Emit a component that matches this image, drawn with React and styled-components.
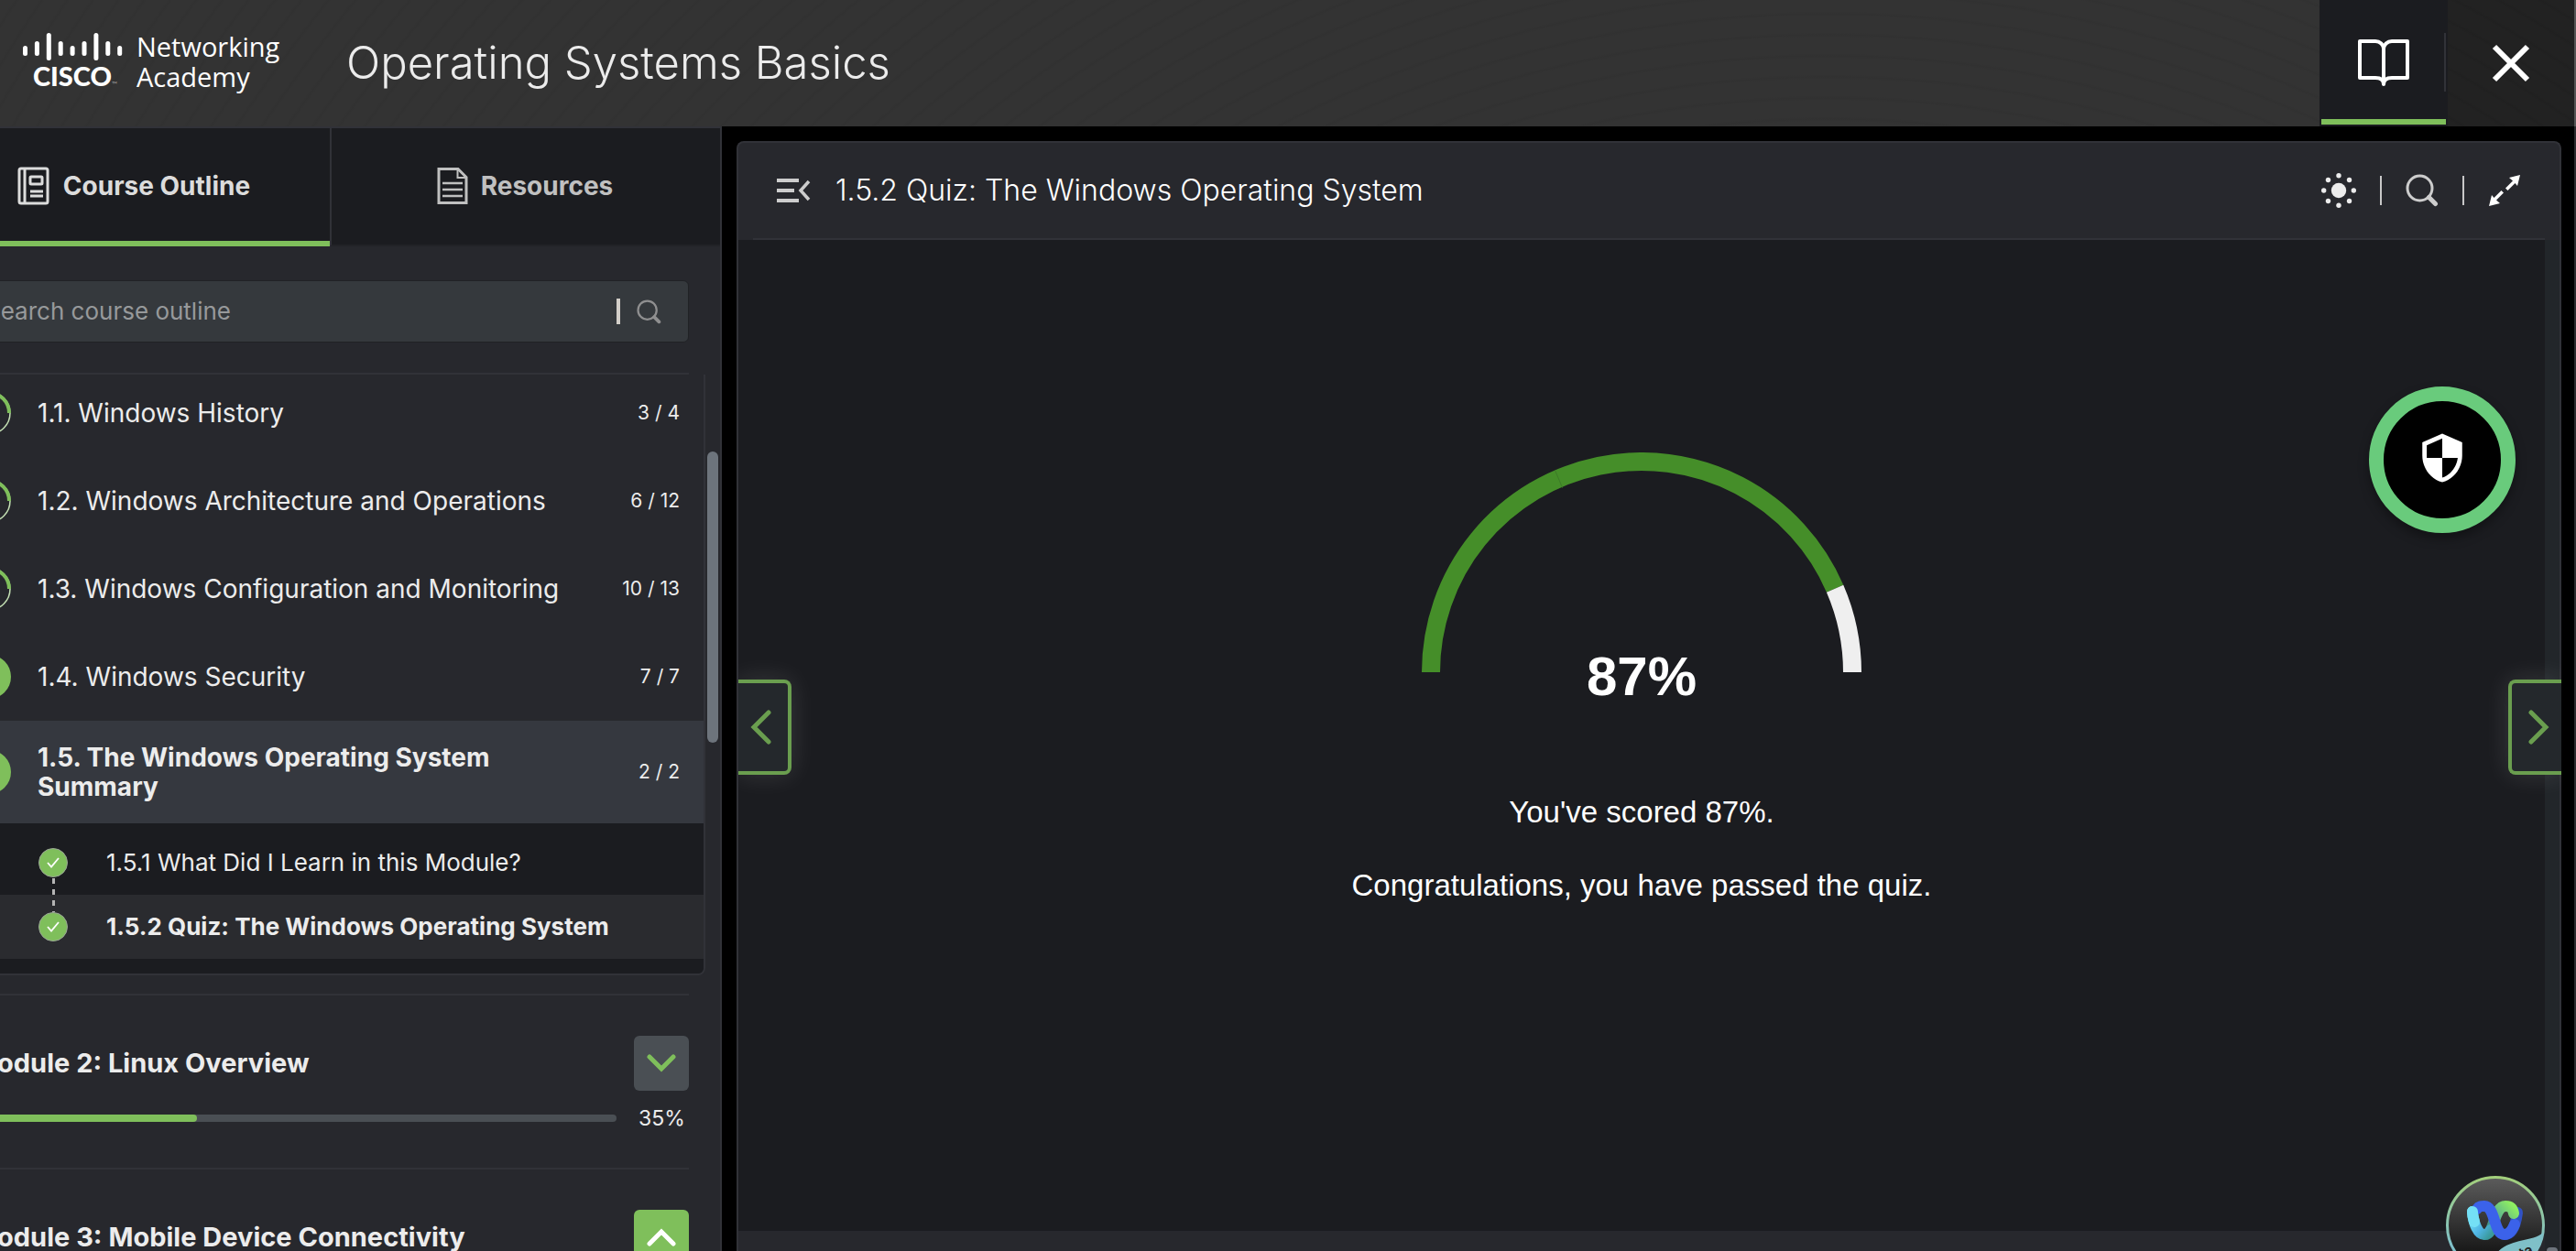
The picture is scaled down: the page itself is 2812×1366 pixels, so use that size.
import React from "react";
import styled, { createGlobalStyle, css } from "styled-components";
import { MdSecurity } from "react-icons/md";

const c = {
  green: "#7fbf5b",
  line: "#313238",
  panel: "#27282d",
  dark: "#1b1c20",
  text: "#ececec",
};

const GlobalStyle = createGlobalStyle`
  * { box-sizing: border-box; }
  body { margin: 0; background: #000; }
  button { font: inherit; color: inherit; background: none; border: 0; padding: 0; cursor: pointer; }
  svg { display: block; }
  h1, h2, h3, p, ul { margin: 0; padding: 0; }
  ul { list-style: none; }
`;

const Page = styled.div`
  display: flex;
  flex-direction: column;
  height: 100vh;
  overflow: hidden;
  color: ${c.text};
  font-family: Inter, "Liberation Sans", sans-serif;
  font-size: 28px;
  line-height: 32px;
`;

/* ---------- top bar ---------- */
const TopBar = styled.header`
  display: flex;
  flex: 0 0 138px;
  align-items: center;
  padding-left: 24px;
  border-right: 2px solid #555;
  background:
    repeating-radial-gradient(circle at 71% 1300px, transparent 0 17px, rgba(0, 0, 0, 0.04) 20px, transparent 23px),
    #333;
`;
const Brand = styled.a`
  display: flex;
  align-items: center;
  gap: 15px;
  width: 354px;
  padding-bottom: 4px;
  color: #fff;
  text-decoration: none;
`;
const CiscoMark = styled.span`
  display: flex;
  flex-direction: column;
  align-items: center;
  width: 110px;
  svg { width: 110px; height: 32px; }
`;
const CiscoWord = styled.span`
  display: flex;
  align-items: flex-end;
  padding-left: 6px;
  font: 900 29px/32px Lato, sans-serif;
  small { color: #999; font: 400 8px/14px Lato, sans-serif; }
`;
const AcademyWord = styled.span`
  font: 400 29px/33px "Open Sans", "Noto Sans", sans-serif;
`;
const CourseTitle = styled.h1`
  flex: 1;
  font-size: 49px;
  line-height: 60px;
  font-weight: 350;
`;
const TopButton = styled.button`
  display: flex;
  align-items: center;
  justify-content: center;
  align-self: stretch;
  position: relative;
  width: ${(p) => (p.$active ? 140 : 138)}px;
  background: ${(p) => (p.$active ? c.dark : "rgba(0, 0, 0, 0.33)")};
  ${(p) =>
    p.$active &&
    css`
      &::before {
        content: "";
        position: absolute;
        inset: auto 2px 2px;
        height: 6px;
        background: ${c.green};
      }
      &::after {
        content: "";
        position: absolute;
        top: 36px;
        right: 2px;
        width: 2px;
        height: 64px;
        background: ${c.line};
      }
    `}
`;

/* ---------- frame ---------- */
const Body = styled.div`
  display: flex;
  flex: 1;
  min-height: 0;
  border-right: 2px solid #2b2c2e;
`;
const Sidebar = styled.aside`
  position: relative;
  flex: 0 0 854px;
  margin-left: -66px;
  overflow: hidden;
  border-right: 2px solid ${c.line};
  background: ${c.panel};
`;
const Tabs = styled.div`
  display: grid;
  grid-template-columns: 1fr 1fr;
  height: 131px;
  border-top: 2px solid ${c.line};
`;
const Tab = styled.button`
  display: flex;
  align-items: center;
  justify-content: center;
  gap: 14px;
  padding: 2px 2px ${(p) => (p.$active ? 0 : 4)}px 0;
  background: ${c.dark};
  color: ${(p) => (p.$active ? "#dcdcdc" : "#c0c0c0")};
  font-weight: 700;
  border-bottom: ${(p) => (p.$active ? `6px solid ${c.green}` : "2px solid #222327")};
  & + & { border-left: 2px solid ${c.line}; }
`;
const Inset = styled.div`
  padding: 0 34px;
`;
const SearchBox = styled.label`
  display: flex;
  align-items: center;
  gap: 18px;
  height: 68px;
  margin: 37px 0 33px;
  padding: 0 29px 0 15px;
  border: 1px solid #202225;
  border-radius: 6px;
  background: #35393d;
`;
const SearchInput = styled.input`
  flex: 1;
  min-width: 0;
  padding: 0;
  border: 0;
  outline: 0;
  background: none;
  color: ${c.text};
  font: 400 26px/32px Inter, "Liberation Sans", sans-serif;
  &::placeholder { color: #97999b; opacity: 1; }
`;
const Caret = styled.span`
  width: 4px;
  height: 28px;
  background: #d3cfc9;
`;
const Rule = styled.hr`
  height: 2px;
  margin: 0;
  border: 0;
  background: ${c.line};
`;
const Outline = styled.div`
  margin: 0 16px 20px 0;
  overflow: hidden;
  border: solid ${c.line};
  border-width: 0 2px 2px 0;
  border-radius: 0 0 8px 0;
`;
const OutlineList = styled.ul`
  margin-top: -6px;
`;
const TopicRow = styled.button`
  display: flex;
  align-items: center;
  width: 100%;
  padding: ${(p) => (p.$active ? 24 : 32)}px 26px ${(p) => (p.$active ? 24 : 32)}px 30px;
  background: ${(p) => (p.$active ? "#35383f" : "transparent")};
  font-weight: ${(p) => (p.$active ? 700 : 400)};
  text-align: left;
`;
const Ring = styled.svg`
  flex: none;
  width: 48px;
  height: 48px;
  margin: -8px 29px -8px 0;
`;
const TopicName = styled.span`
  flex: 1;
`;
const Count = styled.span`
  width: 110px;
  font-size: 21px;
  font-weight: 400;
  text-align: right;
`;
const Lessons = styled.ul`
  padding: 8px 0 16px;
  background: ${c.dark};
`;
const LessonRow = styled.button`
  display: flex;
  align-items: center;
  gap: 42px;
  width: 100%;
  height: 70px;
  padding-left: 108px;
  background: ${(p) => (p.$active ? "#2a2b2f" : "transparent")};
  font-size: 26px;
  font-weight: ${(p) => (p.$active ? 700 : 400)};
  text-align: left;
`;
const Done = styled.span`
  display: grid;
  place-items: center;
  position: relative;
  width: 32px;
  height: 32px;
  border: 1px solid #9aa595;
  border-radius: 50%;
  background: ${c.green};
  ${(p) =>
    p.$linked &&
    css`
      &::after {
        content: "";
        position: absolute;
        top: 32px;
        left: 14px;
        width: 3px;
        height: 37px;
        background: repeating-linear-gradient(#b4b4b4 0 6px, transparent 6px 12px);
      }
    `}
`;
const Module = styled.section`
  padding: 44px 0 40px;
  border-top: 2px solid ${c.line};
`;
const ModuleHead = styled.div`
  display: flex;
  align-items: center;
  justify-content: space-between;
`;
const ModuleTitle = styled.h3`
  padding-left: 2px;
  font-size: 29px;
  line-height: 36px;
  font-weight: 700;
`;
const Toggle = styled.button`
  display: grid;
  place-items: center;
  width: 60px;
  height: 60px;
  border-radius: 6px;
  background: ${(p) => (p.$open ? c.green : "#4a4f54")};
  color: ${(p) => (p.$open ? "#fff" : c.green)};
`;
const ProgressRow = styled.div`
  display: flex;
  align-items: center;
  gap: 24px;
  height: 28px;
  margin-top: 16px;
  font-size: 23px;
`;
const Track = styled.div`
  flex: 1;
  height: 8px;
  overflow: hidden;
  border-radius: 4px;
  background: #4a4f54;
`;
const Fill = styled.div`
  height: 100%;
  border-radius: 4px;
  background: ${c.green};
`;
const Percent = styled.span`
  width: 55px;
`;
const SideThumb = styled.div`
  position: absolute;
  top: 355px;
  right: 2px;
  width: 12px;
  height: 318px;
  border-radius: 6px;
  background: #6d747c;
`;

/* ---------- content ---------- */
const Main = styled.main`
  display: flex;
  flex: 1;
  min-width: 0;
  padding: 16px 14px 0 16px;
  background: #000;
`;
const Panel = styled.section`
  display: flex;
  flex-direction: column;
  flex: 1;
  position: relative;
  min-width: 0;
  border: solid ${c.line};
  border-width: 2px 2px 0;
  border-radius: 8px 8px 0 0;
  background: ${c.panel};
`;
const PanelHead = styled.div`
  display: flex;
  align-items: center;
  gap: 26px;
  height: 106px;
  margin: 0 16px;
  padding: 0 26px;
  border-bottom: 2px solid ${c.line};
`;
const PanelTitle = styled.h2`
  flex: 1;
  color: #fff;
  font-size: 32px;
  line-height: 40px;
  font-weight: 300;
`;
const IconButton = styled.button`
  display: grid;
  place-items: center;
  width: ${(p) => p.$w}px;
  height: 40px;
`;
const Divider = styled.span`
  width: 2px;
  height: 32px;
  background: #c8c8c8;
`;
const PanelBody = styled.div`
  display: flex;
  flex: 1;
  min-height: 0;
`;
const Stage = styled.div`
  display: flex;
  flex-direction: column;
  flex: 1;
  padding-bottom: 22px;
`;
const Quiz = styled.div`
  display: flex;
  flex-direction: column;
  align-items: center;
  flex: 1;
  padding-top: 232px;
  background: ${c.dark};
  color: #fff;
  font-family: "Liberation Sans", Arial, sans-serif;
`;
const Gauge = styled.div`
  display: grid;
  justify-items: center;
  height: 280px;
  margin-bottom: 53px;
  & > * { grid-area: 1 / 1; }
`;
const Score = styled.strong`
  align-self: end;
  font-size: 60px;
  line-height: 70px;
`;
const Message = styled.p`
  margin-top: 40px;
  font-size: 33px;
  line-height: 40px;
`;
const ScrollTrack = styled.div`
  display: flex;
  flex-direction: column;
  justify-content: flex-end;
  width: 16px;
  padding: 0 2px;
  background: #22262a;
`;
const ScrollThumb = styled.div`
  height: 4px;
  border-radius: 6px 6px 0 0;
  background: #6d747c;
`;
const PageButton = styled.button`
  display: grid;
  place-items: center;
  position: absolute;
  top: 586px;
  width: 58px;
  height: 104px;
  border: 4px solid #6a9e4f;
  background: #24282c;
  color: #6a9e4f;
  ${(p) =>
    p.$next
      ? css`right: -2px; padding-left: 4px; border-right: 0; border-radius: 8px 0 0 8px;`
      : css`left: 0; padding-right: 4px; border-left: 0; border-radius: 0 8px 8px 0;`}
  box-shadow: 0 0 28px rgba(255, 255, 255, 0.13);
  clip-path: ${(p) => (p.$next ? "inset(-30px 0 -30px -30px)" : "inset(-30px -30px -30px 0)")};
`;
const ShieldButton = styled.button`
  display: grid;
  place-items: center;
  position: absolute;
  top: 266px;
  right: 48px;
  width: 160px;
  height: 160px;
  padding-bottom: 4px;
  border: 16px solid #69cb7c;
  border-radius: 50%;
  background: #000;
  color: #fff;
  box-shadow: 0 6px 12px rgba(0, 0, 0, 0.35);
`;
const AssistantButton = styled.button`
  position: absolute;
  right: 16px;
  bottom: -26px;
  width: 108px;
  height: 108px;
`;

/* ---------- drawings ---------- */
const BARS = [[50, 61], [45, 61], [36, 66], [45, 61], [50, 61], [45, 61], [36, 66], [45, 61], [50, 61]];

const CiscoBars = () => (
  <svg viewBox="24 35 110 32" stroke="#fff" strokeWidth="5" strokeLinecap="round" aria-hidden="true">
    {BARS.map(([a, b], i) => (
      <line key={i} x1={27.5 + i * 12.9} x2={27.5 + i * 12.9} y1={a + 2.5} y2={b - 2.5} />
    ))}
  </svg>
);

const BookIcon = () => (
  <svg width="58" height="54" viewBox="0 0 58 54" fill="none" stroke="#fff" strokeWidth="4" strokeLinejoin="round" aria-hidden="true">
    <path d="M3 3h17c5 0 9 4 9 8 0-4 4-8 9-8h17v40H38c-5 0-9 2-9 7 0-5-4-7-9-7H3z" />
    <path d="M29 10v39" strokeLinecap="round" />
  </svg>
);

const CloseIcon = () => (
  <svg width="42" height="42" viewBox="0 0 42 42" stroke="#fff" strokeWidth="6" aria-hidden="true">
    <path d="M3 3l36 36M39 3L3 39" />
  </svg>
);

const NotebookIcon = () => (
  <svg width="36" height="42" viewBox="0 0 36 42" fill="none" stroke="currentColor" strokeWidth="3" aria-hidden="true">
    <rect x="2" y="2" width="31" height="38" rx="2" />
    <path d="M8 2v38M14 27h14M14 32h14" />
    <rect x="14" y="11" width="13" height="8" rx="1" />
  </svg>
);

const DocumentIcon = () => (
  <svg width="34" height="40" viewBox="0 0 34 40" fill="none" stroke="currentColor" strokeWidth="3" aria-hidden="true">
    <path d="M2 1.500h21l9 9v28H2z" />
    <path d="M22.500 2v9H32" strokeWidth="2" />
    <path d="M6 17h22M6 24h22M6 31h22" strokeWidth="2.500" />
  </svg>
);

const SearchIcon = ({ size, color, weight }) => (
  <svg width={size} height={size} viewBox="0 0 36 36" fill="none" stroke={color} aria-hidden="true">
    <circle cx="15.500" cy="15.500" r="13.500" strokeWidth={weight} />
    <path d="M25.500 25.500l7 7" strokeWidth={weight + 2} strokeLinecap="round" />
  </svg>
);

const MenuIcon = () => (
  <svg width="38" height="26" viewBox="0 0 38 26" fill="none" stroke="#cdcdcd" aria-hidden="true">
    <path d="M0 2h24M0 13h19M0 24h24" strokeWidth="4" />
    <path d="M35 3L26 13l9 10" strokeWidth="3.500" />
  </svg>
);

const SunIcon = () => (
  <svg width="38" height="38" viewBox="0 0 38 38" fill="#ececec" aria-hidden="true">
    <circle cx="19" cy="19" r="8.200" />
    {Array.from({ length: 8 }, (_, i) => {
      const a = (i * Math.PI) / 4;
      return <circle key={i} cx={19 + 16.3 * Math.cos(a)} cy={19 + 16.3 * Math.sin(a)} r="2.700" />;
    })}
  </svg>
);

const ExpandIcon = () => (
  <svg width="34" height="34" viewBox="0 0 34 34" fill="#fff" aria-hidden="true">
    <path d="M34 0L22 3l4 3.500-8 8 2.500 2.500 8-8L31 12zM0 34l12-3-4-3.500 8-8-2.500-2.500-8 8L3 22z" />
  </svg>
);

const Chevron = ({ d, w, h, weight }) => (
  <svg width={w} height={h} viewBox={`0 0 ${w} ${h}`} fill="none" stroke="currentColor" strokeWidth={weight} strokeLinecap="round" aria-hidden="true">
    <path d={d} />
  </svg>
);

const GaugeArc = () => (
  <svg width="480" height="240" viewBox="0 0 480 240" fill="none" strokeWidth="20" aria-hidden="true">
    <path d="M10 240A230 230 0 0 1 451.080 148.660" stroke="#458e29" />
    <path d="M451.080 148.660A230 230 0 0 1 470 240" stroke="#efefef" />
    <path d="M145.500 19.500l8 19" stroke="#3c7a27" strokeWidth="1" />
  </svg>
);

const AssistantLogo = () => (
  <svg width="108" height="108" viewBox="0 0 108 108" fill="none" aria-hidden="true">
    <defs>
      <linearGradient id="rim" x1="0" y1="0" x2="0" y2="1">
        <stop offset="0" stopColor="#a3cf7c" />
        <stop offset=".7" stopColor="#7fc0c8" />
      </linearGradient>
      <linearGradient id="face" x1="0" y1="0" x2="0" y2="1">
        <stop offset="0" stopColor="#5c5c5c" />
        <stop offset=".8" stopColor="#161616" />
      </linearGradient>
      <linearGradient id="cyan" x1="0" y1="0" x2="1" y2="1">
        <stop offset="0" stopColor="#7beaf8" />
        <stop offset=".6" stopColor="#4fb4e4" />
        <stop offset="1" stopColor="#3a9a9c" />
      </linearGradient>
      <linearGradient id="lime" x1="0" y1="1" x2="1" y2="0">
        <stop offset="0" stopColor="#2f7f86" />
        <stop offset=".5" stopColor="#58ad90" />
        <stop offset="1" stopColor="#8eee62" />
      </linearGradient>
      <clipPath id="disc"><circle cx="54" cy="54" r="53" /></clipPath>
    </defs>
    <circle cx="54" cy="54" r="52.500" fill="url(#face)" stroke="url(#rim)" strokeWidth="3" />
    <g strokeWidth="12" strokeLinecap="round">
      <path d="M78 40C76 56 71 64 64 64" stroke="#3152c4" />
      <path d="M43 64C53 64 52 33 65 33 70 33 73 35 74 41" stroke="url(#lime)" />
      <path d="M29 39C30 52 35 64 42 64 45 64 47 62 49 59" stroke="url(#cyan)" />
      <path d="M34 36C36 33 38 33 42 33 54 33 52 64 64 64 69 64 72 60 75 53" stroke="#3b62ea" />
      <path d="M29 39C29 43 30 47 31 50" stroke="#74e0f6" />
    </g>
    <g clipPath="url(#disc)">
      <path d="M50 92C64 66 92 74 106 62V108H50z" fill="#7fc0c8" />
      <text x="64" y="98" transform="rotate(-22 64 98)" fill="#222" fontFamily="Inter, sans-serif" fontWeight="600" fontSize="16">Beta</text>
    </g>
  </svg>
);

const StatusRing = ({ complete }) => (
  <Ring viewBox="0 0 48 48" fill="none" aria-hidden="true">
    {complete ? (
      <circle cx="24" cy="24" r="24" fill={c.green} />
    ) : (
      <>
        <circle cx="24" cy="24" r="23" stroke="#c4e0b4" strokeWidth="1.500" />
        <path d="M2 24A22 22 0 0 1 46 24" stroke={c.green} strokeWidth="4" />
      </>
    )}
  </Ring>
);

/* ---------- data ---------- */
const topics = [
  { name: "1.1. Windows History", count: "3 / 4" },
  { name: "1.2. Windows Architecture and Operations", count: "6 / 12" },
  { name: "1.3. Windows Configuration and Monitoring", count: "10 / 13" },
  { name: "1.4. Windows Security", count: "7 / 7", complete: true },
  { name: "1.5. The Windows Operating System Summary", count: "2 / 2", complete: true, active: true },
];
const lessons = [
  { name: "1.5.1 What Did I Learn in this Module?" },
  { name: "1.5.2 Quiz: The Windows Operating System", active: true },
];
const modules = [
  { name: "Module 2: Linux Overview", progress: 35 },
  { name: "Module 3: Mobile Device Connectivity", open: true },
];

export default function App() {
  return (
    <Page>
      <GlobalStyle />
      <TopBar>
        <Brand href="#home">
          <CiscoMark>
            <CiscoBars />
            <CiscoWord>CISCO<small>™</small></CiscoWord>
          </CiscoMark>
          <AcademyWord>Networking<br />Academy</AcademyWord>
        </Brand>
        <CourseTitle>Operating Systems Basics</CourseTitle>
        <TopButton $active aria-label="Course"><BookIcon /></TopButton>
        <TopButton aria-label="Close"><CloseIcon /></TopButton>
      </TopBar>
      <Body>
        <Sidebar>
          <Tabs>
            <Tab $active><NotebookIcon />Course Outline</Tab>
            <Tab><DocumentIcon />Resources</Tab>
          </Tabs>
          <Inset>
            <SearchBox>
              <SearchInput type="text" placeholder="Search course outline" aria-label="Search course outline" />
              <Caret />
              <SearchIcon size={27} color="#8f8f90" weight={3} />
            </SearchBox>
            <Rule />
          </Inset>
          <Outline>
            <OutlineList>
              {topics.map((t) => (
                <li key={t.name}>
                  <TopicRow $active={t.active}>
                    <StatusRing complete={t.complete} />
                    <TopicName>{t.name}</TopicName>
                    <Count>{t.count}</Count>
                  </TopicRow>
                </li>
              ))}
            </OutlineList>
            <Lessons>
              {lessons.map((l, i) => (
                <li key={l.name}>
                  <LessonRow $active={l.active}>
                    <Done $linked={i < lessons.length - 1}>
                      <svg width="14" height="12" viewBox="0 0 14 12" fill="none" stroke="#fff" strokeWidth="1.800" aria-hidden="true">
                        <path d="M1 6l4 4.500L13 1" />
                      </svg>
                    </Done>
                    {l.name}
                  </LessonRow>
                </li>
              ))}
            </Lessons>
          </Outline>
          <Inset>
            {modules.map((m) => (
              <Module key={m.name}>
                <ModuleHead>
                  <ModuleTitle>{m.name}</ModuleTitle>
                  <Toggle $open={m.open} aria-label={m.name}>
                    <Chevron
                      w={34}
                      h={20}
                      weight={5}
                      d={m.open ? "M4 17L17 4l13 13" : "M4 3l13 13L30 3"}
                    />
                  </Toggle>
                </ModuleHead>
                {m.progress !== undefined && (
                  <ProgressRow>
                    <Track><Fill style={{ width: `${m.progress}%` }} /></Track>
                    <Percent>{m.progress}%</Percent>
                  </ProgressRow>
                )}
              </Module>
            ))}
          </Inset>
          <SideThumb />
        </Sidebar>
        <Main>
          <Panel>
            <PanelHead>
              <IconButton $w={38} aria-label="Collapse outline"><MenuIcon /></IconButton>
              <PanelTitle>1.5.2 Quiz: The Windows Operating System</PanelTitle>
              <IconButton $w={38} aria-label="Brightness"><SunIcon /></IconButton>
              <Divider />
              <IconButton $w={36} aria-label="Search"><SearchIcon size={36} color="#cdcdcd" weight={3} /></IconButton>
              <Divider />
              <IconButton $w={36} aria-label="Full screen"><ExpandIcon /></IconButton>
            </PanelHead>
            <PanelBody>
              <Stage>
                <Quiz>
                  <Gauge>
                    <GaugeArc />
                    <Score>87%</Score>
                  </Gauge>
                  <Message>You've scored 87%.</Message>
                  <Message>Congratulations, you have passed the quiz.</Message>
                </Quiz>
              </Stage>
              <ScrollTrack><ScrollThumb /></ScrollTrack>
            </PanelBody>
            <PageButton aria-label="Previous page"><Chevron w={24} h={38} weight={5} d="M20 3L4 19l16 16" /></PageButton>
            <PageButton $next aria-label="Next page"><Chevron w={24} h={38} weight={5} d="M4 3l16 16L4 35" /></PageButton>
            <ShieldButton aria-label="Protection status"><MdSecurity size={58} /></ShieldButton>
            <AssistantButton aria-label="Assistant"><AssistantLogo /></AssistantButton>
          </Panel>
        </Main>
      </Body>
    </Page>
  );
}
